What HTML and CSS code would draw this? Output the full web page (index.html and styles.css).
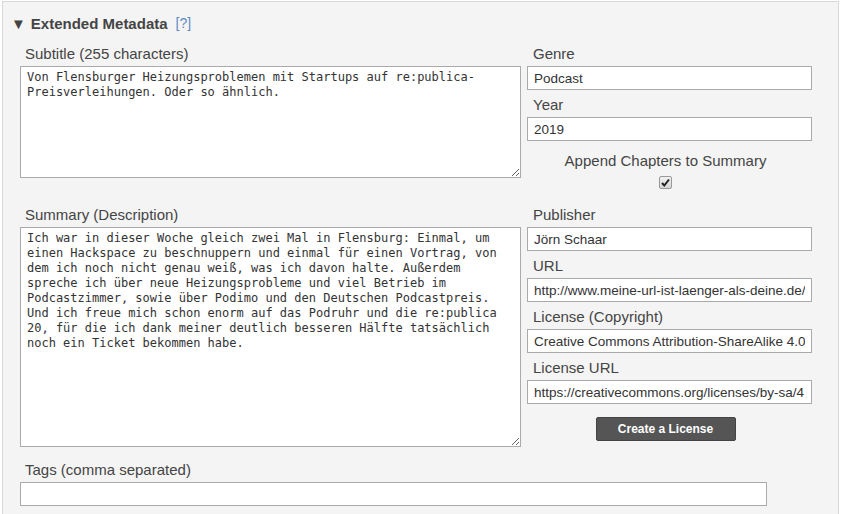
FILE: index.html
```html
<!DOCTYPE html>
<html lang="de">
<head>
    <meta charset="UTF-8">
    <title>Extended Metadata</title>
    <link rel="stylesheet" href="styles.css">
</head>
<body>
    <div class="metabox">
        <div class="metabox-title">
            <span class="toggle">▼</span> Extended Metadata <a class="help" href="#">[?]</a>
        </div>

        <div class="meta-grid">
            <!-- first row: subtitle + genre / year -->
            <div class="field">
                <label class="field-label">Subtitle (255 characters)</label>
                <textarea class="area area-short">Von Flensburger Heizungsproblemen mit Startups auf re:publica-Preisverleihungen. Oder so ähnlich.</textarea>
            </div>
            <div class="side">
                <label class="field-label">Genre</label>
                <input class="text-input" type="text" value="Podcast">
                <label class="field-label">Year</label>
                <input class="text-input" type="text" value="2019">
                <div class="centered">
                    <div class="append-label">Append Chapters to Summary</div>
                    <span class="check">
                        <svg width="11" height="11" viewBox="0 0 11 11"><path d="M2 6 L4.3 8.5 L9 2.5" fill="none" stroke="#222" stroke-width="2"/></svg>
                    </span>
                </div>
            </div>

            <!-- second row: summary + publisher / license -->
            <div class="field">
                <label class="field-label">Summary (Description)</label>
                <textarea class="area area-tall">Ich war in dieser Woche gleich zwei Mal in Flensburg: Einmal, um einen Hackspace zu beschnuppern und einmal für einen Vortrag, von dem ich noch nicht genau weiß, was ich davon halte. Außerdem spreche ich über neue Heizungsprobleme und viel Betrieb im Podcastzimmer, sowie über Podimo und den Deutschen Podcastpreis. Und ich freue mich schon enorm auf das Podruhr und die re:publica 20, für die ich dank meiner deutlich besseren Hälfte tatsächlich noch ein Ticket bekommen habe.</textarea>
            </div>
            <div class="side">
                <label class="field-label">Publisher</label>
                <input class="text-input" type="text" value="Jörn Schaar">
                <label class="field-label">URL</label>
                <input class="text-input" type="text" value="http://www.meine-url-ist-laenger-als-deine.de/">
                <label class="field-label">License (Copyright)</label>
                <input class="text-input" type="text" value="Creative Commons Attribution-ShareAlike 4.0">
                <label class="field-label">License URL</label>
                <input class="text-input" type="text" value="https://creativecommons.org/licenses/by-sa/4.0/">
                <div class="centered">
                    <button class="button" type="button">Create a License</button>
                </div>
            </div>
        </div>

        <div class="tags">
            <label class="field-label">Tags (comma separated)</label>
            <input class="text-input tags-input" type="text">
        </div>
    </div>
</body>
</html>
```

FILE: styles.css
```css
body {
    margin: 0;
    background: white;
    font-family: 'Liberation Sans', Arial, sans-serif;
    color: #444;
}
.metabox {
    margin: 1px 3px 0 2px;
    height: 520px;
    background: #f4f4f4;
    border: 1px solid #d8d8d8;
    border-bottom: none;
    padding: 11px 0 0 0;
    box-sizing: border-box;
}
.metabox-title {
    display: flex;
    align-items: center;
    height: 20px;
    font-size: 15px;
    font-weight: bold;
    padding-left: 8px;
    color: #444;
}
.toggle {
    font-size: 15px;
    margin-right: 5px;
}
.help {
    font-weight: normal;
    font-size: 14px;
    color: #5f8cc4;
    text-decoration: none;
    margin-left: 8px;
}
.meta-grid {
    display: grid;
    grid-template-columns: 501px 285px;
    column-gap: 6px;
    row-gap: 11px;
    margin: 6px 0 0 17px;
    align-items: start;
}
.field, .side {
    display: flex;
    flex-direction: column;
}
.field-label {
    display: block;
    font-size: 15px;
    line-height: 17px;
    padding: 6px 0 4px 5px;
    color: #444;
}
.side .field-label {
    padding-left: 6px;
}
.area {
    box-sizing: border-box;
    width: 501px;
    margin: 0;
    padding: 3px 6px;
    border: 1px solid #aaa;
    background: white;
    font-family: 'DejaVu Sans Mono', Consolas, monospace;
    font-size: 12px;
    line-height: 15px;
    color: #333;
}
.area-short {
    height: 112px;
}
.area-tall {
    height: 220px;
}
.text-input {
    box-sizing: border-box;
    width: 285px;
    height: 24px;
    margin: 0;
    padding: 0 6px;
    border: 1px solid #aaa;
    background: white;
    font-family: 'Liberation Sans', Arial, sans-serif;
    font-size: 13.5px;
    color: #333;
}
.centered {
    display: flex;
    flex-direction: column;
    align-items: center;
    padding-right: 8px;
}
.append-label {
    font-size: 15px;
    line-height: 17px;
    padding-top: 11px;
}
.check {
    display: flex;
    align-items: center;
    justify-content: center;
    width: 11px;
    height: 11px;
    margin-top: 7px;
    border: 1px solid #999;
    border-radius: 2px;
    background: linear-gradient(#f2f2f2, #d6d6d6);
}
.button {
    margin-top: 13px;
    width: 140px;
    height: 24px;
    background: #555;
    color: white;
    border: 1px solid #444;
    border-radius: 2px;
    font-family: 'Liberation Sans', Arial, sans-serif;
    font-size: 12px;
    font-weight: bold;
    cursor: pointer;
}
.tags {
    margin: 8px 0 0 17px;
}
.tags-input {
    width: 747px;
}
```
